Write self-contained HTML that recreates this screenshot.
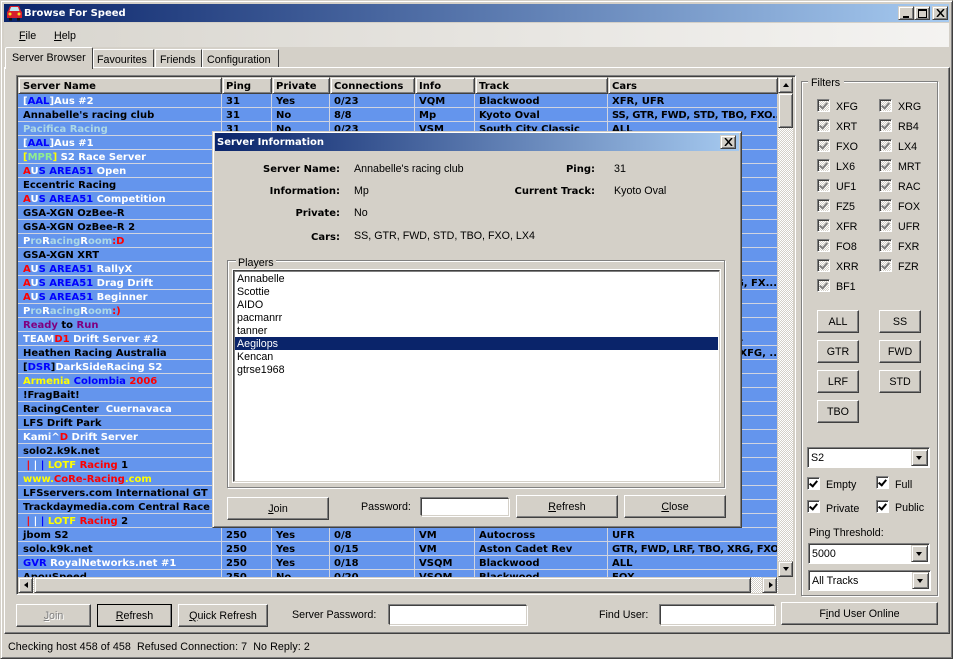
<!DOCTYPE html>
<html><head><meta charset="utf-8"><title>Browse For Speed</title>
<style>
html,body{margin:0;padding:0;background:#d4d0c8;}
#w{position:relative;width:953px;height:659px;overflow:hidden;background:#d4d0c8;font:10.7px "Liberation Sans",sans-serif;color:#000;}
#w div,#w span.a{box-sizing:border-box;}
.a{position:absolute;}
.t{position:absolute;white-space:nowrap;line-height:14px;height:14px;margin-top:1px;}
.B{font:bold 10px "DejaVu Sans",sans-serif;line-height:14px;}
.btn{position:absolute;background:#d4d0c8;border:1px solid;border-color:#fff #404040 #404040 #fff;box-shadow:inset -1px -1px 0 #808080;text-align:center;line-height:22px;white-space:nowrap;}
.sb{position:absolute;background:#d4d0c8;border:1px solid;border-color:#d4d0c8 #404040 #404040 #d4d0c8;box-shadow:inset 1px 1px 0 #fff,inset -1px -1px 0 #808080;}
.up,.dn,.lf,.rt{position:absolute;width:0;height:0;border-style:solid;border-color:transparent;}
.up{left:4px;top:5px;border-width:0 3.5px 4px;border-bottom-color:#000;}
.dn{left:4px;top:5px;border-width:4px 3.5px 0;border-top-color:#000;}
.lf{left:5px;top:3.5px;border-width:3.5px 4px 3.5px 0;border-right-color:#000;}
.rt{left:6px;top:3.5px;border-width:3.5px 0 3.5px 4px;border-left-color:#000;}
.inp{position:absolute;background:#fff;border:1px solid;border-color:#404040 #d4d0c8 #d4d0c8 #404040;box-shadow:-1px -1px 0 #808080,1px 1px 0 #fff;}
.grp{position:absolute;border:1px solid #808080;box-shadow:1px 1px 0 #fff,inset 1px 1px 0 #fff;}
.cb{position:absolute;width:13px;height:13px;border:1px solid;border-color:#808080 #fff #fff #808080;box-shadow:inset 1px 1px 0 #404040;background:repeating-conic-gradient(#d4d0c8 0 25%,#fff 0 50%) 0 0/2px 2px;}
.cb:after{content:"";position:absolute;left:3px;top:1px;width:3px;height:6px;border:solid #808080;border-width:0 2px 2px 0;transform:rotate(40deg);}
.ck{position:absolute;width:13px;height:13px;background:#fff;border:1px solid;border-color:#808080 #fff #fff #808080;box-shadow:inset 1px 1px 0 #404040;}
.ck:after{content:"";position:absolute;left:3px;top:1px;width:3px;height:6px;border:solid #000;border-width:0 2px 2px 0;transform:rotate(40deg);}
.combo{position:absolute;background:#fff;border:1px solid;border-color:#808080 #fff #fff #808080;box-shadow:inset 1px 1px 0 #404040;line-height:20px;padding-left:3px;}
table{border-collapse:separate;border-spacing:0;table-layout:fixed;position:absolute;left:0;top:0;width:759px;}
td{height:14px;box-sizing:border-box;padding:2px 0 0 4px;font:bold 10px "DejaVu Sans",sans-serif;line-height:11px;white-space:nowrap;overflow:hidden;border-bottom:1px solid #d0d4e0;border-right:1px solid #d0d4e0;vertical-align:top;}
td:first-child{padding-left:5px;}
td:last-child{border-right:0;}
u{text-decoration:underline;}
.w{color:#fff}.b{color:#00f}.r{color:#f00}.y{color:#ff0}.l{color:#add8e6}.g{color:#90ee90}.p{color:#800080}
.it{position:absolute;left:237px;white-space:nowrap;line-height:13px;height:13px;margin-top:1px;}
</style></head><body><div id="w">

<!-- window frame -->
<div class="a" style="left:0;top:0;width:953px;height:659px;border:1px solid;border-color:#d4d0c8 #404040 #404040 #d4d0c8;box-shadow:inset 1px 1px 0 #fff,inset -1px -1px 0 #808080;"></div>

<!-- title bar -->
<div class="a" style="left:4px;top:4px;width:945px;height:18px;background:linear-gradient(90deg,#0a246a,#a6caf0);"></div>
<svg class="a" style="left:5px;top:4px" width="19" height="18" viewBox="0 0 19 18"><path d="M5 2h9l2 5 1 1v6h-2v2h-2v-2H6v2H4v-2H2V8l1-1z" fill="#d81e2c"/><path d="M6 3h7l1.500 4h-10z" fill="#bfe8f0"/><path d="M4 14h3v2.500H4zM12 14h3v2.500h-3z" fill="#111"/><circle cx="5" cy="10" r="1.500" fill="#f8e020"/><circle cx="14" cy="10" r="1.500" fill="#f8e020"/></svg>
<div class="t" style="left:24px;top:6px;color:#fff;font:bold 10px 'DejaVu Sans',sans-serif;line-height:14px;">Browse For Speed</div>
<div class="sb" style="left:898px;top:6px;width:16px;height:14px;"><div class="a" style="left:4px;top:9px;width:6px;height:2px;background:#000"></div></div>
<div class="sb" style="left:914px;top:6px;width:16px;height:14px;"><div class="a" style="left:3px;top:2px;width:9px;height:9px;border:1px solid #000;border-top-width:2px"></div></div>
<div class="sb" style="left:932px;top:6px;width:16px;height:14px;"><svg class="a" style="left:3px;top:2px" width="9" height="8" viewBox="0 0 9 8"><path d="M1 0l7 8M8 0l-7 8" stroke="#000" stroke-width="1.500" fill="none"/></svg></div>

<!-- menu -->
<div class="a" style="left:4px;top:23px;width:945px;height:24px;background:linear-gradient(90deg,#d8d5ce,#f4f3f1);"></div>
<div class="t" style="left:19px;top:28px"><u>F</u>ile</div>
<div class="t" style="left:54px;top:28px"><u>H</u>elp</div>

<!-- tab page -->
<div class="a" style="left:4px;top:67px;width:946px;height:567px;border:1px solid;border-color:#fff #404040 #404040 #fff;box-shadow:inset -1px -1px 0 #808080;"></div>
<!-- tabs -->
<div class="a" style="left:5px;top:47px;width:88px;height:22px;background:#d4d0c8;border:1px solid;border-color:#fff #404040 #d4d0c8 #fff;border-bottom:0;border-radius:2px 2px 0 0;"></div>
<div class="t" style="left:12px;top:50px">Server Browser</div>
<div class="a" style="left:93px;top:49px;width:61px;height:18px;border:1px solid;border-color:#fff #404040 transparent #fff;border-bottom:0;"></div>
<div class="t" style="left:97px;top:52px">Favourites</div>
<div class="a" style="left:155px;top:49px;width:47px;height:18px;border:1px solid;border-color:#fff #404040 transparent #fff;border-bottom:0;"></div>
<div class="t" style="left:160px;top:52px">Friends</div>
<div class="a" style="left:202px;top:49px;width:77px;height:18px;border:1px solid;border-color:#fff #404040 transparent #fff;border-bottom:0;"></div>
<div class="t" style="left:207px;top:52px">Configuration</div>

<!-- list frame -->
<div class="a" style="left:16px;top:75px;width:780px;height:520px;border:1px solid;border-color:#808080 #fff #fff #808080;box-shadow:inset 1px 1px 0 #404040;"></div>
<!-- header -->
<div class="a" style="left:18px;top:77px;width:760px;height:17px;background:#d4d0c8;"></div>
<div class="sb" style="left:18px;top:77px;width:204px;height:17px"></div>
<div class="sb" style="left:222px;top:77px;width:50px;height:17px"></div>
<div class="sb" style="left:272px;top:77px;width:58px;height:17px"></div>
<div class="sb" style="left:330px;top:77px;width:85px;height:17px"></div>
<div class="sb" style="left:415px;top:77px;width:60px;height:17px"></div>
<div class="sb" style="left:475px;top:77px;width:133px;height:17px"></div>
<div class="sb" style="left:608px;top:77px;width:170px;height:17px"></div>
<div class="t B" style="left:23px;top:79px">Server Name</div>
<div class="t B" style="left:226px;top:79px">Ping</div>
<div class="t B" style="left:276px;top:79px">Private</div>
<div class="t B" style="left:334px;top:79px">Connections</div>
<div class="t B" style="left:419px;top:79px">Info</div>
<div class="t B" style="left:479px;top:79px">Track</div>
<div class="t B" style="left:612px;top:79px">Cars</div>

<!-- rows -->
<div class="a" style="left:18px;top:94px;width:759px;height:483px;overflow:hidden;background:#6495ed;">
<table><colgroup><col style="width:204px"><col style="width:50px"><col style="width:58px"><col style="width:85px"><col style="width:60px"><col style="width:133px"><col style="width:169px"></colgroup>
<tr><td><span class="w">[</span><span class="b">AAL</span><span class="w">]Aus #2</span></td><td>31</td><td>Yes</td><td>0/23</td><td>VQM</td><td>Blackwood</td><td>XFR, UFR</td></tr>
<tr><td>Annabelle's racing club</td><td>31</td><td>No</td><td>8/8</td><td>Mp</td><td>Kyoto Oval</td><td style="letter-spacing:-.25px">SS, GTR, FWD, STD, TBO, FXO..</td></tr>
<tr><td><span class="l">Pacifica Racing</span></td><td>31</td><td>No</td><td>0/23</td><td>VSM</td><td>South City Classic</td><td>ALL</td></tr>
<tr><td><span class="w">[</span><span class="b">AAL</span><span class="w">]Aus #1</span></td><td></td><td></td><td></td><td></td><td></td><td></td></tr>
<tr><td><span class="y">[</span><span class="g">MPR</span><span class="y">]</span><span class="w"> S2 Race Server</span></td><td></td><td></td><td></td><td></td><td></td><td></td></tr>
<tr><td><span class="r">A</span><span class="w">U</span><span class="b">S AREA51</span><span class="w"> Open</span></td><td></td><td></td><td></td><td></td><td></td><td></td></tr>
<tr><td>Eccentric Racing</td><td></td><td></td><td></td><td></td><td></td><td></td></tr>
<tr><td><span class="r">A</span><span class="w">U</span><span class="b">S AREA51</span><span class="w"> Competition</span></td><td></td><td></td><td></td><td></td><td></td><td></td></tr>
<tr><td>GSA-XGN OzBee-R</td><td></td><td></td><td></td><td></td><td></td><td></td></tr>
<tr><td>GSA-XGN OzBee-R 2</td><td></td><td></td><td></td><td></td><td></td><td></td></tr>
<tr><td><span class="w">P</span><span class="l">ro</span><span class="w">R</span><span class="l">acing</span><span class="w">R</span><span class="l">oom</span><span class="r">:D</span></td><td></td><td></td><td></td><td></td><td></td><td></td></tr>
<tr><td>GSA-XGN XRT</td><td></td><td></td><td></td><td></td><td></td><td></td></tr>
<tr><td><span class="r">A</span><span class="w">U</span><span class="b">S AREA51</span><span class="w"> RallyX</span></td><td></td><td></td><td></td><td></td><td></td><td></td></tr>
<tr><td><span class="r">A</span><span class="w">U</span><span class="b">S AREA51</span><span class="w"> Drag Drift</span></td><td></td><td></td><td></td><td></td><td></td><td style="text-align:right;padding:2px 0 0">XRG, FX...</td></tr>
<tr><td><span class="r">A</span><span class="w">U</span><span class="b">S AREA51</span><span class="w"> Beginner</span></td><td></td><td></td><td></td><td></td><td></td><td></td></tr>
<tr><td><span class="w">P</span><span class="l">ro</span><span class="w">R</span><span class="l">acing</span><span class="w">R</span><span class="l">oom</span><span class="r">:)</span></td><td></td><td></td><td></td><td></td><td></td><td></td></tr>
<tr><td><span class="p">Ready</span> to <span class="p">Run</span></td><td></td><td></td><td></td><td></td><td></td><td></td></tr>
<tr><td><span class="w">TEAM</span><span class="r">D1</span><span class="w"> Drift Server #2</span></td><td></td><td></td><td></td><td></td><td></td><td style="padding-left:114px">LX4</td></tr>
<tr><td>Heathen Racing Australia</td><td></td><td></td><td></td><td></td><td></td><td style="text-align:right;padding:2px 0 0">XFG, ..</td></tr>
<tr><td>[<span class="b">DSR</span>]<span class="w">DarkSideRacing S2</span></td><td></td><td></td><td></td><td></td><td></td><td></td></tr>
<tr><td><span class="y">Armenia</span> <span class="b">Colombia</span> <span class="r">2006</span></td><td></td><td></td><td></td><td></td><td></td><td></td></tr>
<tr><td>!FragBait!</td><td></td><td></td><td></td><td></td><td></td><td></td></tr>
<tr><td>RacingCenter <span class="w">&nbsp;Cuernavaca</span></td><td></td><td></td><td></td><td></td><td></td><td></td></tr>
<tr><td>LFS Drift Park</td><td></td><td></td><td></td><td></td><td></td><td></td></tr>
<tr><td><span class="w">Kami^</span><span class="r">D</span><span class="w"> Drift Server</span></td><td></td><td></td><td></td><td></td><td></td><td></td></tr>
<tr><td>solo2.k9k.net</td><td></td><td></td><td></td><td></td><td></td><td></td></tr>
<tr><td>&nbsp;<span class="r">|</span> <span class="w">|</span> <span class="b">|</span> <span class="y">LOTF</span> <span class="r">Racing</span> 1</td><td></td><td></td><td></td><td></td><td></td><td></td></tr>
<tr><td><span class="y">www.</span><span class="r">CoRe-Racing</span><span class="y">.com</span></td><td></td><td></td><td></td><td></td><td></td><td></td></tr>
<tr><td>LFSservers.com International GT</td><td></td><td></td><td></td><td></td><td></td><td></td></tr>
<tr><td>Trackdaymedia.com Central Race</td><td></td><td></td><td></td><td></td><td></td><td></td></tr>
<tr><td>&nbsp;<span class="r">|</span> <span class="w">|</span> <span class="b">|</span> <span class="y">LOTF</span> <span class="r">Racing</span> 2</td><td></td><td></td><td></td><td></td><td></td><td></td></tr>
<tr><td>jbom S2</td><td>250</td><td>Yes</td><td>0/8</td><td>VM</td><td>Autocross</td><td>UFR</td></tr>
<tr><td>solo.k9k.net</td><td>250</td><td>Yes</td><td>0/15</td><td>VM</td><td>Aston Cadet Rev</td><td style="letter-spacing:-.25px">GTR, FWD, LRF, TBO, XRG, FXO</td></tr>
<tr><td><span class="b">GVR</span><span class="w"> RoyalNetworks.net #1</span></td><td>250</td><td>Yes</td><td>0/18</td><td>VSQM</td><td>Blackwood</td><td>ALL</td></tr>
<tr><td>ApouSpeed</td><td>250</td><td>No</td><td>0/20</td><td>VSQM</td><td>Blackwood</td><td>FOX</td></tr>
</table></div>

<!-- scrollbars -->
<div class="a" style="left:778px;top:94px;width:15px;height:483px;background:repeating-conic-gradient(#d4d0c8 0 25%,#fff 0 50%) 0 0/2px 2px;"></div>
<div class="sb" style="left:778px;top:77px;width:15px;height:16px"><div class="up"></div></div>
<div class="sb" style="left:778px;top:93px;width:15px;height:35px"></div>
<div class="sb" style="left:778px;top:561px;width:15px;height:16px"><div class="dn"></div></div>
<div class="a" style="left:18px;top:577px;width:760px;height:16px;background:repeating-conic-gradient(#d4d0c8 0 25%,#fff 0 50%) 0 0/2px 2px;"></div>
<div class="sb" style="left:18px;top:577px;width:15px;height:16px"><div class="lf"></div></div>
<div class="sb" style="left:34px;top:577px;width:717px;height:16px"></div>
<div class="sb" style="left:762px;top:577px;width:15px;height:16px"><div class="rt"></div></div>
<div class="a" style="left:778px;top:577px;width:15px;height:16px;background:#d4d0c8"></div>

<!-- bottom controls -->
<div class="btn" style="left:16px;top:604px;width:75px;height:23px;color:#808080;text-shadow:1px 1px 0 #fff;"><u>J</u>oin</div>
<div class="btn" style="left:97px;top:604px;width:75px;height:23px;outline:1px solid #000;outline-offset:-1px;"><u>R</u>efresh</div>
<div class="btn" style="left:178px;top:604px;width:90px;height:23px;"><u>Q</u>uick Refresh</div>
<div class="t" style="left:292px;top:607px">Server Password:</div>
<div class="inp" style="left:389px;top:605px;width:138px;height:20px;"></div>
<div class="t" style="left:599px;top:607px">Find User:</div>
<div class="inp" style="left:660px;top:605px;width:115px;height:20px;"></div>
<div class="btn" style="left:781px;top:602px;width:157px;height:23px;">F<u>i</u>nd User Online</div>

<!-- status -->
<div class="t" style="left:8px;top:639px;letter-spacing:.07px">Checking host 458 of 458 &nbsp;Refused Connection: 7 &nbsp;No Reply: 2</div>

<!-- filters -->
<div class="grp" style="left:801px;top:81px;width:137px;height:515px;"></div>
<div class="t" style="left:808px;top:75px;background:#d4d0c8;padding:0 4px 0 3px">Filters</div>

<div class="cb" style="left:817px;top:99px"></div><div class="t" style="left:836px;top:99px">XFG</div>
<div class="cb" style="left:879px;top:99px"></div><div class="t" style="left:898px;top:99px">XRG</div>
<div class="cb" style="left:817px;top:119px"></div><div class="t" style="left:836px;top:119px">XRT</div>
<div class="cb" style="left:879px;top:119px"></div><div class="t" style="left:898px;top:119px">RB4</div>
<div class="cb" style="left:817px;top:139px"></div><div class="t" style="left:836px;top:139px">FXO</div>
<div class="cb" style="left:879px;top:139px"></div><div class="t" style="left:898px;top:139px">LX4</div>
<div class="cb" style="left:817px;top:159px"></div><div class="t" style="left:836px;top:159px">LX6</div>
<div class="cb" style="left:879px;top:159px"></div><div class="t" style="left:898px;top:159px">MRT</div>
<div class="cb" style="left:817px;top:179px"></div><div class="t" style="left:836px;top:179px">UF1</div>
<div class="cb" style="left:879px;top:179px"></div><div class="t" style="left:898px;top:179px">RAC</div>
<div class="cb" style="left:817px;top:199px"></div><div class="t" style="left:836px;top:199px">FZ5</div>
<div class="cb" style="left:879px;top:199px"></div><div class="t" style="left:898px;top:199px">FOX</div>
<div class="cb" style="left:817px;top:219px"></div><div class="t" style="left:836px;top:219px">XFR</div>
<div class="cb" style="left:879px;top:219px"></div><div class="t" style="left:898px;top:219px">UFR</div>
<div class="cb" style="left:817px;top:239px"></div><div class="t" style="left:836px;top:239px">FO8</div>
<div class="cb" style="left:879px;top:239px"></div><div class="t" style="left:898px;top:239px">FXR</div>
<div class="cb" style="left:817px;top:259px"></div><div class="t" style="left:836px;top:259px">XRR</div>
<div class="cb" style="left:879px;top:259px"></div><div class="t" style="left:898px;top:259px">FZR</div>
<div class="cb" style="left:817px;top:279px"></div><div class="t" style="left:836px;top:279px">BF1</div>

<div class="btn" style="left:817px;top:310px;width:42px;height:23px;">ALL</div>
<div class="btn" style="left:879px;top:310px;width:42px;height:23px;">SS</div>
<div class="btn" style="left:817px;top:340px;width:42px;height:23px;">GTR</div>
<div class="btn" style="left:879px;top:340px;width:42px;height:23px;">FWD</div>
<div class="btn" style="left:817px;top:370px;width:42px;height:23px;">LRF</div>
<div class="btn" style="left:879px;top:370px;width:42px;height:23px;">STD</div>
<div class="btn" style="left:817px;top:400px;width:42px;height:23px;">TBO</div>

<div class="combo" style="left:807px;top:447px;width:123px;height:21px;">S2<div class="sb" style="right:1px;top:1px;width:17px;height:17px"><div class="dn" style="left:4px;top:6px"></div></div></div>
<div class="ck" style="left:807px;top:477px"></div><div class="t" style="left:826px;top:477px">Empty</div>
<div class="ck" style="left:876px;top:476px"></div><div class="t" style="left:895px;top:477px">Full</div>
<div class="ck" style="left:807px;top:500px"></div><div class="t" style="left:826px;top:501px">Private</div>
<div class="ck" style="left:876px;top:500px"></div><div class="t" style="left:895px;top:500px">Public</div>
<div class="t" style="left:809px;top:525px">Ping Threshold:</div>
<div class="combo" style="left:808px;top:543px;width:122px;height:21px;">5000<div class="sb" style="right:1px;top:1px;width:17px;height:17px"><div class="dn" style="left:4px;top:6px"></div></div></div>
<div class="combo" style="left:808px;top:570px;width:123px;height:21px;">All Tracks<div class="sb" style="right:1px;top:1px;width:17px;height:17px"><div class="dn" style="left:4px;top:6px"></div></div></div>

<!-- dialog -->
<div class="a" style="left:212px;top:131px;width:530px;height:397px;background:#d4d0c8;border:1px solid;border-color:#d4d0c8 #404040 #404040 #d4d0c8;box-shadow:inset 1px 1px 0 #fff,inset -1px -1px 0 #808080;"></div>
<div class="a" style="left:215px;top:133px;width:524px;height:18px;background:linear-gradient(90deg,#0a246a,#a6caf0);"></div>
<div class="t" style="left:217px;top:135px;color:#fff;font:bold 10px 'DejaVu Sans',sans-serif;line-height:14px;">Server Information</div>
<div class="sb" style="left:720px;top:135px;width:16px;height:14px;"><svg class="a" style="left:3px;top:2px" width="9" height="8" viewBox="0 0 9 8"><path d="M1 0l7 8M8 0l-7 8" stroke="#000" stroke-width="1.500" fill="none"/></svg></div>

<div class="t B" style="right:613px;top:162px">Server Name:</div>
<div class="t B" style="right:613px;top:184px">Information:</div>
<div class="t B" style="right:613px;top:206px">Private:</div>
<div class="t B" style="right:613px;top:230px">Cars:</div>
<div class="t" style="left:354px;top:161px">Annabelle's racing club</div>
<div class="t" style="left:354px;top:183px">Mp</div>
<div class="t" style="left:354px;top:205px">No</div>
<div class="t" style="left:354px;top:228px">SS, GTR, FWD, STD, TBO, FXO, LX4</div>
<div class="t B" style="right:358px;top:162px">Ping:</div>
<div class="t B" style="right:358px;top:184px">Current Track:</div>
<div class="t" style="left:614px;top:161px">31</div>
<div class="t" style="left:614px;top:183px">Kyoto Oval</div>

<div class="grp" style="left:227px;top:260px;width:498px;height:228px;"></div>
<div class="t" style="left:236px;top:255px;background:#d4d0c8;padding:0 2px">Players</div>
<div class="a" style="left:233px;top:270px;width:487px;height:212px;background:#fff;border:1px solid;border-color:#404040 #d4d0c8 #d4d0c8 #404040;box-shadow:inset 1px 1px 0 #808080;outline:1px solid #fff;outline-offset:0;"></div>
<div class="a" style="left:235px;top:337px;width:483px;height:13px;background:#0a246a;"></div>
<div class="it" style="top:272px">Annabelle</div>
<div class="it" style="top:285px">Scottie</div>
<div class="it" style="top:298px">AIDO</div>
<div class="it" style="top:311px">pacmanrr</div>
<div class="it" style="top:324px">tanner</div>
<div class="it" style="top:337px;color:#fff">Aegilops</div>
<div class="it" style="top:350px">Kencan</div>
<div class="it" style="top:363px">gtrse1968</div>

<div class="btn" style="left:227px;top:497px;width:102px;height:23px;"><u>J</u>oin</div>
<div class="t" style="left:361px;top:499px">Password:</div>
<div class="inp" style="left:421px;top:498px;width:88px;height:18px;"></div>
<div class="btn" style="left:516px;top:495px;width:102px;height:23px;"><u>R</u>efresh</div>
<div class="btn" style="left:624px;top:495px;width:102px;height:23px;"><u>C</u>lose</div>

</div></body></html>
